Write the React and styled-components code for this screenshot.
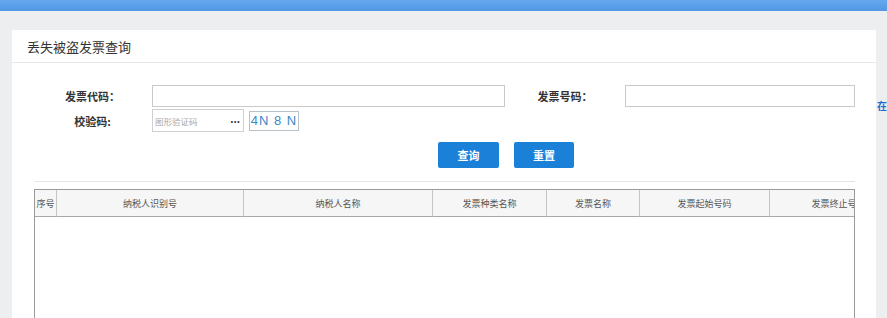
import React from 'react';
import styled, { createGlobalStyle } from 'styled-components';

const Global = createGlobalStyle`
  html, body { margin: 0; padding: 0; background: #eceef0; overflow: hidden; }
  body { font-family: "Noto Sans CJK SC", "Noto Sans", sans-serif; width: 887px; height: 318px; }
  * { box-sizing: border-box; }
`;

const TopBar = styled.div`
  height: 11px;
  background: linear-gradient(180deg, #66a8ef 0%, #5197e3 100%);
`;

const Main = styled.div`
  display: flex;
  align-items: flex-start;
  padding: 19px 0 0 12px;
  height: 307px;
  overflow: hidden;
`;

const Card = styled.div`
  flex: none;
  width: 864px;
  height: 320px;
  background: #fff;
`;

const CardHeader = styled.div`
  height: 33px;
  border-bottom: 1px solid #e8e8e8;
  display: flex;
  align-items: center;
  padding-left: 15px;
  font-size: 13px;
  color: #333;
`;

const CardBody = styled.div`
  padding: 22px 21px 0 21px;
`;

const FormRow = styled.div`
  display: flex;
  align-items: center;
  height: ${p => p.$h}px;
  margin-bottom: 2px;
`;

const Label = styled.div`
  flex: none;
  width: ${p => p.$w}px;
  text-align: center;
  font-size: 11px;
  font-weight: 700;
  color: #333;
`;

const TextInput = styled.div`
  flex: none;
  width: ${p => p.$w}px;
  height: 22px;
  border: 1px solid #c9c9c9;
  background: #fff;
`;

const CaptchaField = styled.div`
  flex: none;
  width: 92px;
  height: 23px;
  border: 1px solid #d0d0d0;
  display: flex;
  align-items: center;
  justify-content: space-between;
  padding: 0 3px 0 2px;
`;

const Placeholder = styled.span`
  font-size: 8.5px;
  color: #a8a8a8;
`;

const Dots = styled.span`
  font-size: 10px;
  color: #333;
  font-weight: 700;
  line-height: 1;
  padding-bottom: 3px;
`;

const CaptchaImg = styled.div`
  flex: none;
  margin-left: 5px;
  width: 50px;
  height: 20px;
  border: 1px solid #b8c0c8;
  display: flex;
  align-items: center;
  justify-content: center;
  font-family: "Liberation Sans", Arial, sans-serif;
  font-size: 13px;
  letter-spacing: 1px;
  color: #3b88c6;
  white-space: pre;
`;

const ButtonRow = styled.div`
  display: flex;
  gap: 15px;
  margin-top: 10px;
  padding-left: 405px;
`;

const Button = styled.button`
  width: ${p => p.$w}px;
  height: 26px;
  border: none;
  border-radius: 2px;
  background: #1a80d8;
  color: #fff;
  font-family: inherit;
  font-size: 11px;
  font-weight: 700;
  padding: 0;
`;

const Divider = styled.div`
  margin: 13px 0 0 2px;
  width: 820px;
  height: 1px;
  background: #e4e4e4;
`;

const TableWrap = styled.div`
  margin: 7px 0 0 1px;
  width: 821px;
  height: 200px;
  border: 1px solid #9a9a9a;
  border-bottom: none;
  overflow: hidden;
`;

const Table = styled.table`
  table-layout: fixed;
  border-collapse: separate;
  border-spacing: 0;
  width: 873px;
`;

const Th = styled.th`
  width: ${p => p.$w}px;
  height: 27px;
  padding: 0;
  background: #f6f6f6;
  border-right: 1px solid #c4c4c4;
  border-bottom: 1px solid #a8a8a8;
  font-size: 9px;
  font-weight: 400;
  color: #555;
  text-align: center;
  white-space: nowrap;
  overflow: hidden;
`;

const Side = styled.div`
  flex: none;
  margin: 68px 0 0 1px;
  font-size: 10px;
  font-weight: 700;
  color: #1c6fd0;
  white-space: nowrap;
`;

const columns = [
  ['序号', 22],
  ['纳税人识别号', 187],
  ['纳税人名称', 189],
  ['发票种类名称', 114],
  ['发票名称', 93],
  ['发票起始号码', 130],
  ['发票终止号码', 138],
];

export default function App() {
  return (
    <>
      <Global />
      <TopBar />
      <Main>
        <Card>
          <CardHeader>丢失被盗发票查询</CardHeader>
          <CardBody>
            <FormRow $h={22}>
              <Label $w={119}>发票代码：</Label>
              <TextInput $w={353} />
              <Label $w={120}>发票号码：</Label>
              <TextInput $w={230} />
            </FormRow>
            <FormRow $h={23}>
              <Label $w={119}>校验码:</Label>
              <CaptchaField>
                <Placeholder>图形验证码</Placeholder>
                <Dots>...</Dots>
              </CaptchaField>
              <CaptchaImg>{'4N 8 N'}</CaptchaImg>
            </FormRow>
            <ButtonRow>
              <Button $w={61}>查询</Button>
              <Button $w={60}>重置</Button>
            </ButtonRow>
            <Divider />
            <TableWrap>
              <Table>
                <thead>
                  <tr>
                    {columns.map(([t, w]) => (
                      <Th key={t} $w={w}>{t}</Th>
                    ))}
                  </tr>
                </thead>
              </Table>
            </TableWrap>
          </CardBody>
        </Card>
        <Side>在</Side>
      </Main>
    </>
  );
}
